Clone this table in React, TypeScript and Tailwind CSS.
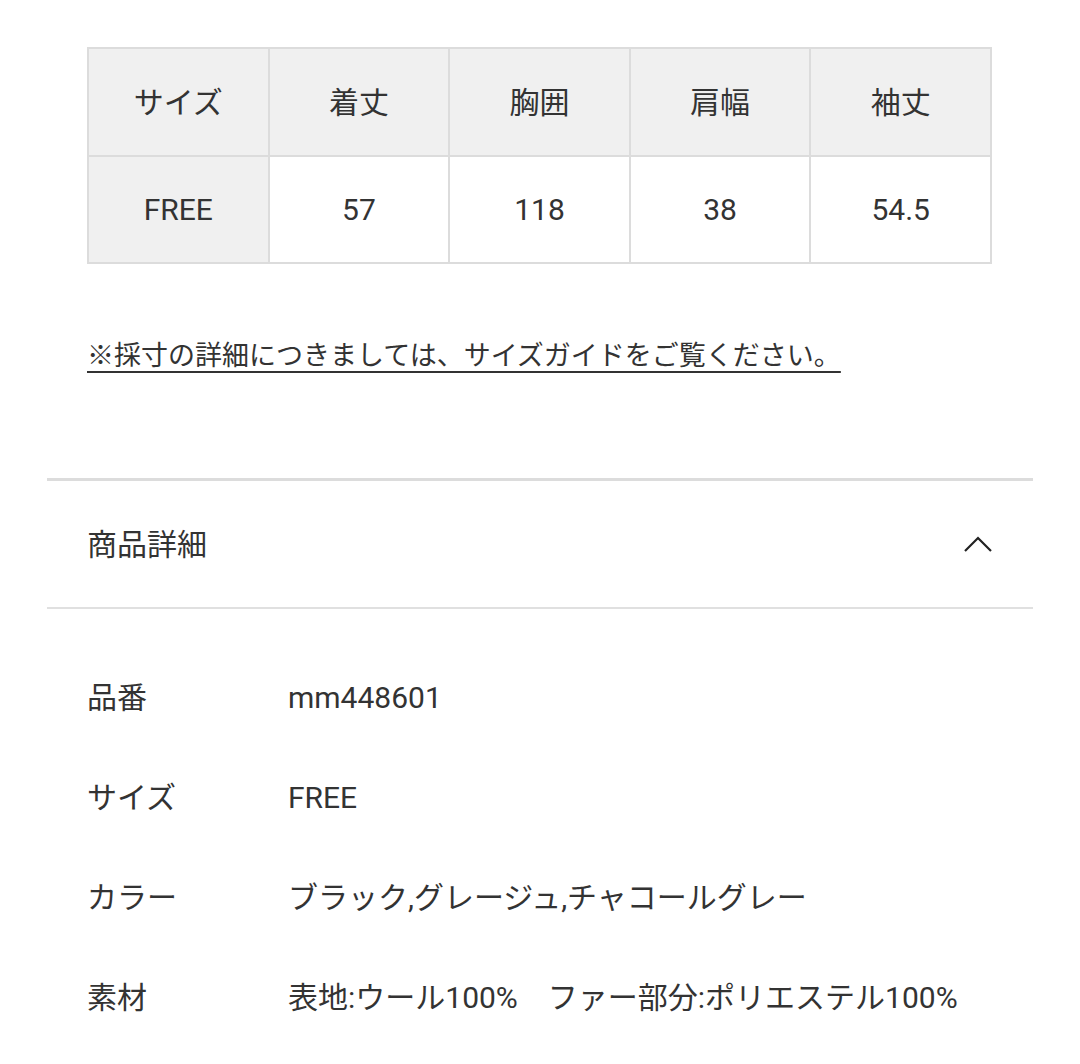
import React from 'react';

const FONT = "font-['Roboto','Noto_Sans_CJK_JP',sans-serif]";

const HEADERS = ['サイズ', '着丈', '胸囲', '肩幅', '袖丈'];
const VALUES = ['FREE', '57', '118', '38', '54.5'];

const DETAILS = [
  { label: '品番', value: 'mm448601' },
  { label: 'サイズ', value: 'FREE' },
  { label: 'カラー', value: 'ブラック,グレージュ,チャコールグレー' },
  { label: '素材', value: '表地:ウール100%　ファー部分:ポリエステル100%' },
];

function SizeTable() {
  return (
    <table className="w-[905px] border-collapse table-fixed text-[30px] text-[#333]">
      <tbody>
        <tr className="h-[108px]">
          {HEADERS.map(h => (
            <th key={h} className="border-2 border-[#dcdcdc] bg-[#f0f0f0] font-normal text-center">
              {h}
            </th>
          ))}
        </tr>
        <tr className="h-[107px]">
          {VALUES.map((v, i) => (
            <td
              key={v}
              className={`border-2 border-[#dcdcdc] text-center ${i === 0 ? 'bg-[#f0f0f0]' : 'bg-white'}`}
            >
              {v}
            </td>
          ))}
        </tr>
      </tbody>
    </table>
  );
}

function ChevronUp() {
  return (
    <svg width="30" height="18" viewBox="0 0 30 18" fill="none" stroke="#222" strokeWidth={2.2}>
      <path d="M2 16L15 3l13 13" />
    </svg>
  );
}

export default function App() {
  return (
    <div className={`${FONT} w-[1080px] h-[1064px] bg-white text-[#333] overflow-hidden`}>
      <div className="px-[87px] pt-[47px]">
        <SizeTable />
        <p className="mt-[72px] text-[27px] underline underline-offset-[6px] decoration-[2px] leading-[40px]">
          ※採寸の詳細につきましては、サイズガイドをご覧ください。
        </p>
      </div>

      <div className="mx-[47px] mt-[102px] border-t-[3px] border-[#dcdcdc]">
        <div className="flex items-center justify-between h-[128px] px-[40px] border-b-2 border-[#e0e0e0]">
          <span className="text-[30px]">商品詳細</span>
          <ChevronUp />
        </div>
      </div>

      <div className="px-[87px] pt-[38px]">
        {DETAILS.map(d => (
          <div key={d.label} className="flex items-center h-[100px] text-[30px]">
            <span className="w-[201px] shrink-0">{d.label}</span>
            <span>{d.value}</span>
          </div>
        ))}
      </div>
    </div>
  );
}
